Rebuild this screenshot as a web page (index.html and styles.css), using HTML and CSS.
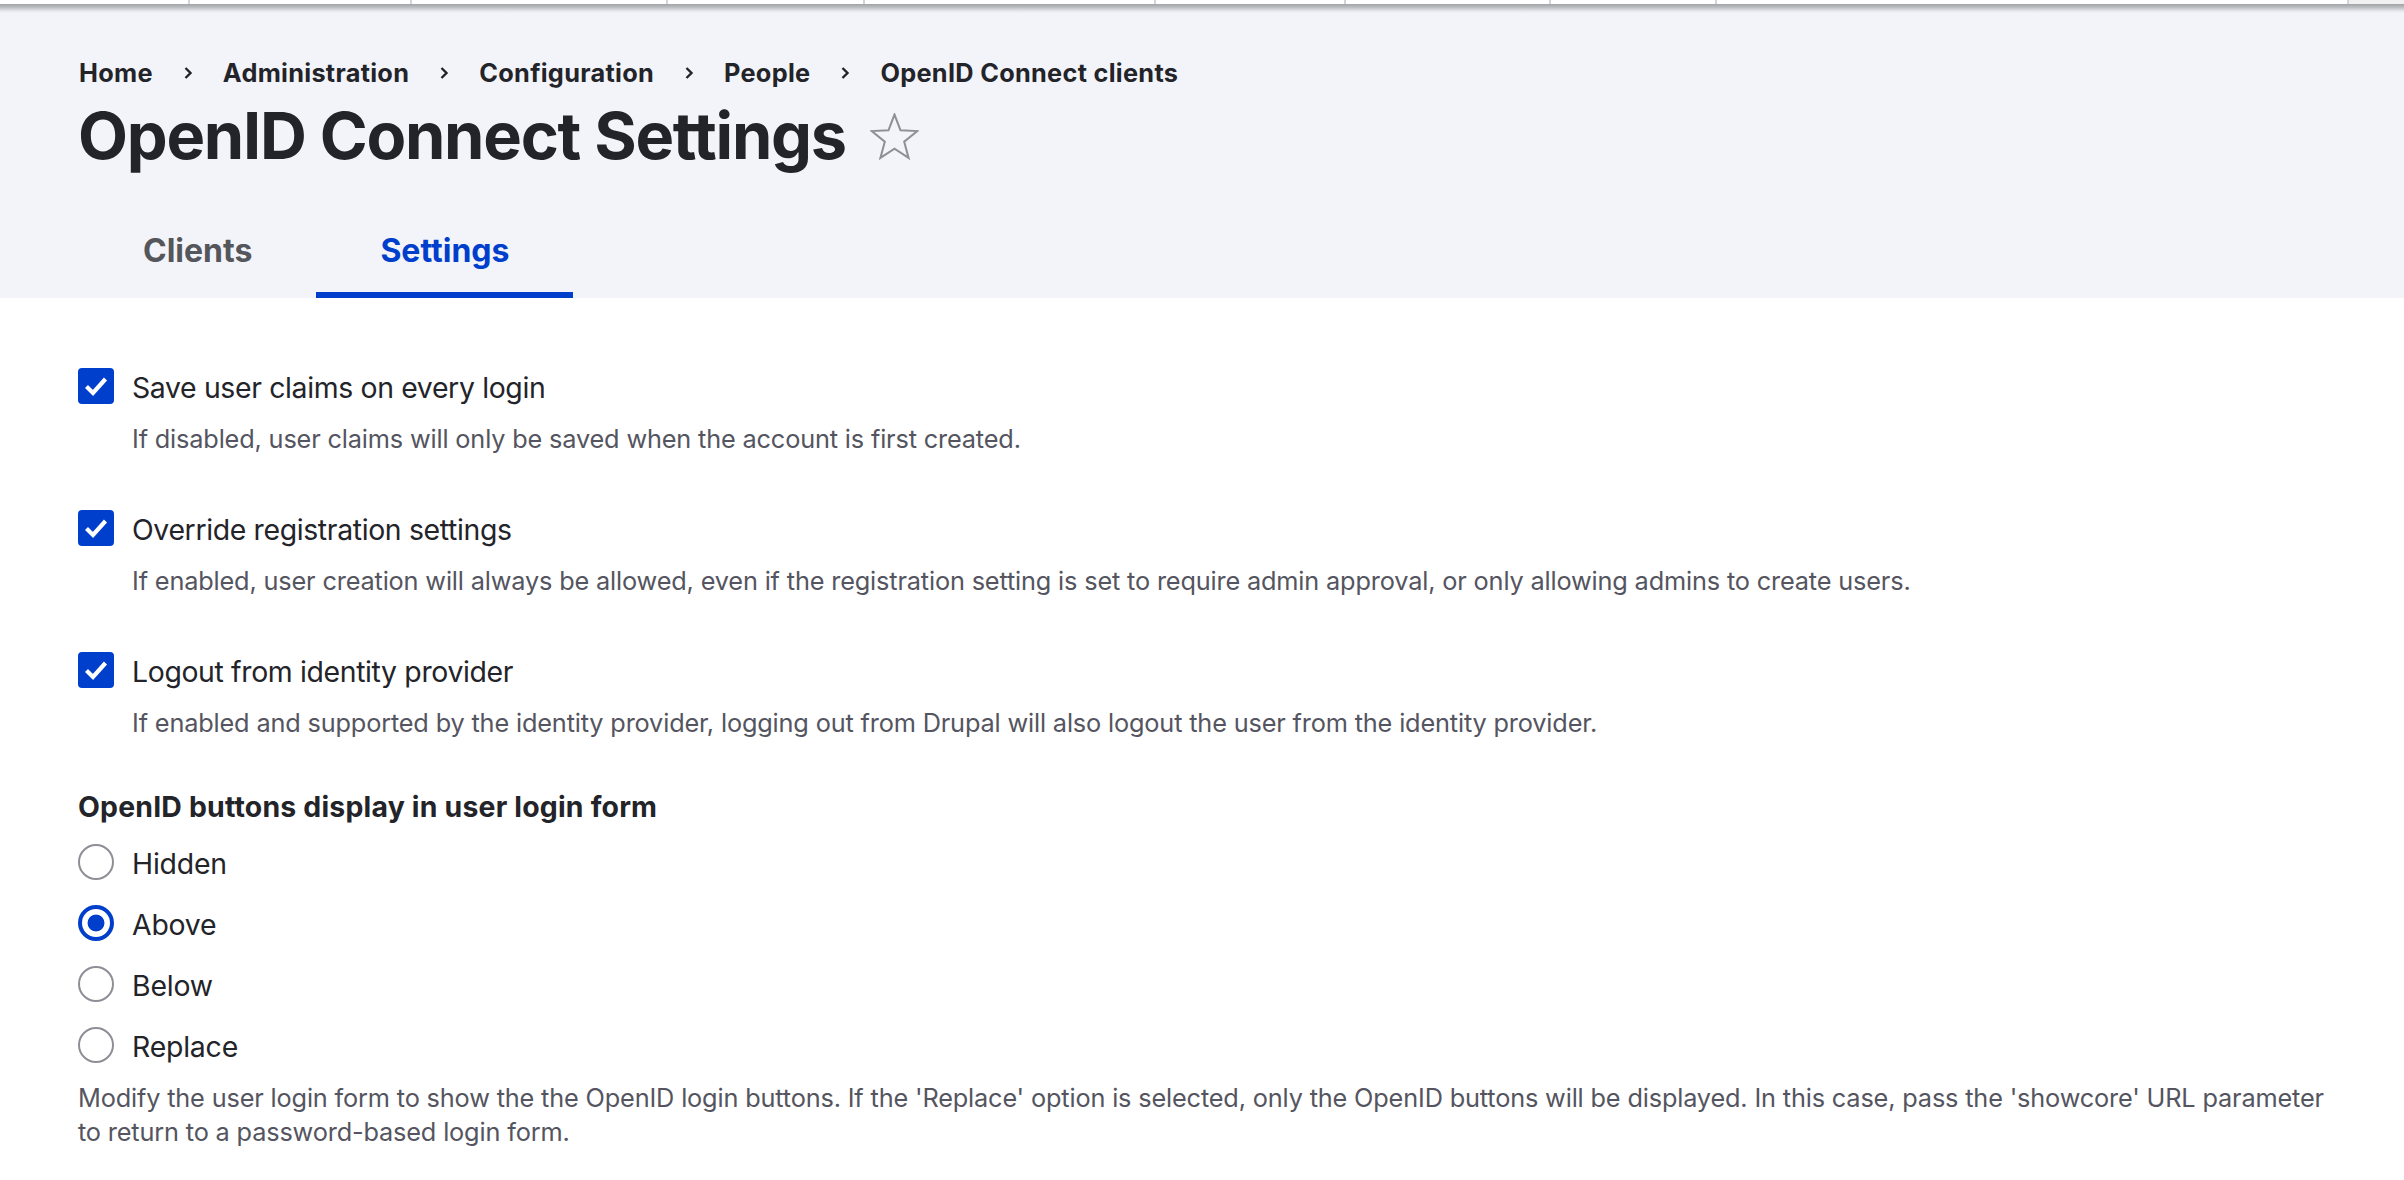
FILE: index.html
```html
<!DOCTYPE html>
<html lang="en">
<head>
<meta charset="utf-8">
<title>OpenID Connect Settings</title>
<link rel="stylesheet" href="styles.css">
</head>
<body>
<div class="toolbar-slice">
  <span class="tb-cell"></span><span class="tb-cell"></span><span class="tb-cell"></span><span class="tb-cell"></span><span class="tb-cell"></span><span class="tb-cell"></span><span class="tb-cell"></span><span class="tb-cell"></span><span class="tb-cell"></span><span class="tb-cell tb-last"></span>
</div>
<header class="page-header">
  <nav class="breadcrumb" aria-label="Breadcrumb">
    <a href="#">Home</a>
    <svg class="sep" viewBox="0 0 10 14" width="10" height="14"><path d="M2.5 2 L7.5 7 L2.5 12" fill="none" stroke="#232429" stroke-width="2.4"/></svg>
    <a href="#">Administration</a>
    <svg class="sep" viewBox="0 0 10 14" width="10" height="14"><path d="M2.5 2 L7.5 7 L2.5 12" fill="none" stroke="#232429" stroke-width="2.4"/></svg>
    <a href="#">Configuration</a>
    <svg class="sep" viewBox="0 0 10 14" width="10" height="14"><path d="M2.5 2 L7.5 7 L2.5 12" fill="none" stroke="#232429" stroke-width="2.4"/></svg>
    <a href="#">People</a>
    <svg class="sep" viewBox="0 0 10 14" width="10" height="14"><path d="M2.5 2 L7.5 7 L2.5 12" fill="none" stroke="#232429" stroke-width="2.4"/></svg>
    <a href="#">OpenID Connect clients</a>
  </nav>
  <h1 class="page-title">OpenID Connect Settings
    <svg class="star" viewBox="0 0 48 48" width="49" height="49"><polygon points="24,1.5 29.9,16.9 46.4,17.7 33.5,28.1 37.8,44 24,35 10.2,44 14.5,28.1 1.6,17.7 18.1,16.9" fill="none" stroke="#8f9097" stroke-width="2" stroke-linejoin="miter"/></svg>
  </h1>
  <nav class="tabs">
    <a href="#" class="tab">Clients</a>
    <a href="#" class="tab tab-active">Settings</a>
  </nav>
</header>
<main class="content">
  <div class="checkbox-list">
    <div class="form-item">
      <div class="check-row">
        <span class="checkbox"><svg viewBox="0 0 36 36" width="36" height="36"><path d="M8.5 18.5 L15 25 L27.5 11" fill="none" stroke="#fff" stroke-width="4.2"/></svg></span>
        <label class="item-label">Save user claims on every login</label>
      </div>
      <div class="description">If disabled, user claims will only be saved when the account is first created.</div>
    </div>
    <div class="form-item">
      <div class="check-row">
        <span class="checkbox"><svg viewBox="0 0 36 36" width="36" height="36"><path d="M8.5 18.5 L15 25 L27.5 11" fill="none" stroke="#fff" stroke-width="4.2"/></svg></span>
        <label class="item-label">Override registration settings</label>
      </div>
      <div class="description">If enabled, user creation will always be allowed, even if the registration setting is set to require admin approval, or only allowing admins to create users.</div>
    </div>
    <div class="form-item">
      <div class="check-row">
        <span class="checkbox"><svg viewBox="0 0 36 36" width="36" height="36"><path d="M8.5 18.5 L15 25 L27.5 11" fill="none" stroke="#fff" stroke-width="4.2"/></svg></span>
        <label class="item-label">Logout from identity provider</label>
      </div>
      <div class="description">If enabled and supported by the identity provider, logging out from Drupal will also logout the user from the identity provider.</div>
    </div>
  </div>
  <fieldset class="radios">
    <div class="legend">OpenID buttons display in user login form</div>
    <div class="radio-list">
      <div class="radio-row"><span class="radio"></span><label class="item-label radio-label">Hidden</label></div>
      <div class="radio-row"><span class="radio radio-checked"></span><label class="item-label radio-label">Above</label></div>
      <div class="radio-row"><span class="radio"></span><label class="item-label radio-label">Below</label></div>
      <div class="radio-row"><span class="radio"></span><label class="item-label radio-label">Replace</label></div>
    </div>
    <div class="description description-flush">Modify the user login form to show the the OpenID login buttons. If the 'Replace' option is selected, only the OpenID buttons will be displayed. In this case, pass the 'showcore' URL parameter<br>to return to a password-based login form.</div>
  </fieldset>
</main>
</body>
</html>
```

FILE: styles.css
```css
* { box-sizing: border-box; }

html, body {
  margin: 0;
  padding: 0;
  background: #ffffff;
}

body {
  font-family: Inter, "Noto Sans", "Liberation Sans", sans-serif;
  color: #232429;
}

.toolbar-slice {
  display: grid;
  grid-template-columns: 190px 222px 256px 197px 291px 190px 205px 166px 632px 1fr;
  height: 4px;
  background: #ffffff;
}

.tb-cell {
  border-right: 2px solid #d4d4d8;
}

.tb-last {
  border-right: none;
  background: #f0f0f0;
}

.page-header {
  background: linear-gradient(to bottom, #a2a3a7 0, #b9babe 3px, #e6e7ec 7px, #f3f4f9 9px) top left / 100% 9px no-repeat, #f3f4f9;
  padding: 54px 0 0 79px;
}

.breadcrumb {
  display: flex;
  align-items: center;
  height: 30px;
  font-size: 25.3px;
  line-height: 30px;
  font-weight: 700;
  letter-spacing: 0.3px;
}

.breadcrumb a {
  color: #232429;
  text-decoration: none;
}

.sep {
  margin: 0 30px 0 30px;
  flex: none;
}

.page-title {
  display: flex;
  align-items: center;
  margin: 9px 0 0 -1px;
  font-size: 64.9px;
  line-height: 78px;
  font-weight: 700;
  letter-spacing: -1.25px;
  color: #232429;
}

.star {
  margin-left: 24px;
  margin-top: 2px;
  flex: none;
}

.tabs {
  display: flex;
  margin-top: 27px;
}

.tab {
  display: flex;
  align-items: center;
  height: 96px;
  padding: 0 64px;
  font-size: 32px;
  font-weight: 700;
  color: #55565b;
  text-decoration: none;
}

.tab-active {
  color: #003ecc;
  box-shadow: inset 0 -6px 0 #003ecc;
}

.content {
  padding: 70px 40px 40px 78px;
}

.checkbox-list {
  display: flex;
  flex-direction: column;
  gap: 54px;
}

.check-row,
.radio-row {
  display: flex;
  align-items: center;
  gap: 18px;
  height: 36px;
}

.checkbox {
  width: 36px;
  height: 36px;
  flex: none;
  border-radius: 4px;
  background: #003ecc;
  display: block;
}

.checkbox svg { display: block; }

.item-label {
  font-size: 28.4px;
  line-height: 36px;
  margin-top: 3px;
  letter-spacing: -0.35px;
  color: #232429;
}

.radio-label {
  letter-spacing: -0.2px;
}

.description {
  margin: 18px 0 0 54px;
  font-size: 25.3px;
  line-height: 34px;
  letter-spacing: -0.16px;
  color: #545560;
}

.radios {
  margin: 49px 0 0 0;
  padding: 0;
  border: 0;
}

.legend {
  font-size: 28.4px;
  line-height: 36px;
  font-weight: 700;
  letter-spacing: 0.2px;
  color: #232429;
}

.radio-list {
  display: flex;
  flex-direction: column;
  gap: 25px;
  margin-top: 19px;
}

.radio {
  width: 36px;
  height: 36px;
  flex: none;
  border-radius: 50%;
  border: 2px solid #8e8f96;
  background: #ffffff;
}

.radio-checked {
  border: 4px solid #003ecc;
  background: radial-gradient(circle, #003ecc 0, #003ecc 8px, #ffffff 8.8px);
}

.description-flush {
  margin: 18px 0 0 0;
}
```
